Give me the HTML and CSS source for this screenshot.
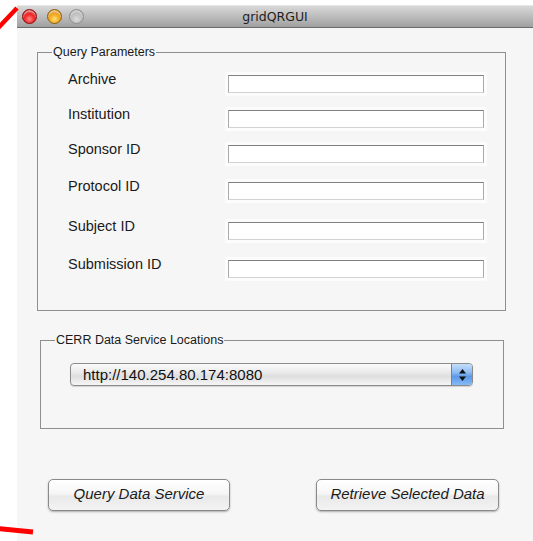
FILE: index.html
```html
<!DOCTYPE html>
<html>
<head>
<meta charset="utf-8">
<title>gridQRGUI</title>
<link rel="stylesheet" href="styles.css">
</head>
<body>
<div class="desk">
  <div class="window">
    <div class="titlebar">
      <div class="lights">
        <span class="light close"></span>
        <span class="light mini"></span>
        <span class="light zoom"></span>
      </div>
      <div class="title">gridQRGUI</div>
    </div>
    <div class="content">
      <div class="group params">
        <span class="legend">Query Parameters</span>
        <div class="form">
          <label class="lbl">Archive</label><input class="field" type="text">
          <label class="lbl">Institution</label><input class="field" type="text">
          <label class="lbl">Sponsor ID</label><input class="field" type="text">
          <label class="lbl">Protocol ID</label><input class="field" type="text">
          <label class="lbl">Subject ID</label><input class="field" type="text">
          <label class="lbl">Submission ID</label><input class="field" type="text">
        </div>
      </div>
      <div class="group locations">
        <span class="legend">CERR Data Service Locations</span>
        <div class="popup">
          <span class="popup-text">http://140.254.80.174:8080</span>
          <span class="popup-arrows">
            <svg width="9" height="14" viewBox="0 0 9 14"><path d="M4.5 1 L8 5.5 L1 5.5 Z M4.5 13 L8 8.5 L1 8.5 Z" fill="#111"/></svg>
          </span>
        </div>
      </div>
      <div class="actions">
        <button class="btn query">Query Data Service</button>
        <button class="btn retrieve">Retrieve Selected Data</button>
      </div>
    </div>
  </div>
  <svg class="marks" width="533" height="541" viewBox="0 0 533 541">
    <line x1="-2" y1="28" x2="17" y2="8" stroke="#ff0000" stroke-width="4.5"/>
    <line x1="-2" y1="528.5" x2="33" y2="532" stroke="#ff0000" stroke-width="5"/>
  </svg>
</div>
</body>
</html>
```
FILE: styles.css
```css
html, body {
  margin: 0;
  padding: 0;
  background: #ffffff;
}

.desk {
  position: relative;
  width: 533px;
  height: 541px;
  overflow: hidden;
  padding: 5px 0 0 17px;
  box-sizing: border-box;
}

.window {
  width: 516px;
  height: 536px;
  background: #f6f6f6;
  display: flex;
  flex-direction: column;
}

.titlebar {
  height: 23px;
  flex: none;
  position: relative;
  display: flex;
  align-items: center;
  background: linear-gradient(#d8d8d8, #c2c2c2 40%, #a0a0a0);
  border-bottom: 1px solid #6c6c6c;
  border-top: 1px solid #e6e6e6;
  box-sizing: border-box;
}

.lights {
  display: flex;
  padding-left: 5px;
}

.light {
  width: 15px;
  height: 15px;
  border-radius: 50%;
  box-sizing: border-box;
}

.light.close {
  background: radial-gradient(circle at 50% 70%, #ff8a8a 0, #f02020 45%, #a80808 100%);
  border: 1px solid #8a0a0a;
  box-shadow: inset 0 2px 2px rgba(255, 255, 255, 0.6);
}

.light.mini {
  margin-left: 10px;
  background: radial-gradient(circle at 50% 70%, #ffe27a 0, #f2a51a 45%, #b06a05 100%);
  border: 1px solid #8e5a06;
  box-shadow: inset 0 2px 2px rgba(255, 255, 255, 0.6);
}

.light.zoom {
  margin-left: 7px;
  background: radial-gradient(circle at 50% 70%, #dcdcdc 0, #bdbdbd 50%, #9a9a9a 100%);
  border: 1px solid #8e8e8e;
  box-shadow: inset 0 2px 2px rgba(255, 255, 255, 0.5);
}

.title {
  position: absolute;
  left: 0;
  right: 0;
  top: 3px;
  text-align: center;
  font-family: "DejaVu Sans", sans-serif;
  font-size: 12.5px;
  line-height: 16px;
  color: #1e1e1e;
  pointer-events: none;
}

.content {
  display: flex;
  flex-direction: column;
  font-family: "Liberation Sans", Arial, sans-serif;
  color: #1a1a1a;
}

.group {
  position: relative;
  border: 1px solid #8f8f8f;
  box-sizing: border-box;
}

.legend {
  position: absolute;
  top: -9px;
  left: 14px;
  padding: 0 1px;
  background: #f6f6f6;
  font-size: 12.5px;
  line-height: 16px;
  color: #1a1a1a;
}

.params {
  margin: 24px 0 0 20px;
  width: 469px;
  height: 259px;
  padding: 18px 0 0 30px;
}

.form {
  display: grid;
  grid-template-columns: 160px 256px;
  grid-template-rows: 35px 35px 37px 40px 38px auto;
  align-items: start;
}

.lbl {
  font-size: 14.5px;
  line-height: 16px;
  color: #1a1a1a;
}

.field {
  margin: 4px 0 0 0;
  width: 256px;
  height: 18px;
  box-sizing: border-box;
  padding: 0;
  background: #ffffff;
  border-style: solid;
  border-width: 1px;
  border-color: #808080 #a9a9a9 #d2d2d2 #a9a9a9;
  box-shadow: 0 0 0 3px #fcfcfc;
  outline: none;
}

.locations {
  margin: 29px 0 0 23px;
  width: 464px;
  height: 89px;
  padding: 22px 0 0 29px;
}

.popup {
  width: 403px;
  height: 23px;
  box-sizing: border-box;
  display: flex;
  align-items: stretch;
  border: 1px solid #8b8b8b;
  border-radius: 4px;
  overflow: hidden;
  background: linear-gradient(#fbfbfb, #ececec 35%, #dedede 60%, #eeeeee 85%, #f6f6f6);
  box-shadow: 0 1px 1px rgba(0, 0, 0, 0.15);
}

.popup-text {
  flex: 1;
  padding-left: 12px;
  font-size: 15px;
  line-height: 21px;
  color: #111;
}

.popup-arrows {
  width: 20px;
  display: flex;
  align-items: center;
  justify-content: center;
  border-left: 1px solid #5f86b8;
  background: linear-gradient(#c4defb, #8fbcf2 40%, #5b98e8 60%, #86bbf6);
}

.actions {
  display: flex;
  margin-top: 50px;
  padding-left: 31px;
}

.btn {
  height: 32px;
  box-sizing: border-box;
  border: 1px solid #8a8a8a;
  border-radius: 5px;
  background: linear-gradient(#ffffff, #f6f6f6 45%, #e9e9e9 55%, #f3f3f3);
  box-shadow: 0 1px 2px rgba(0, 0, 0, 0.3);
  font-family: "Liberation Sans", Arial, sans-serif;
  font-style: italic;
  font-size: 15px;
  color: #1a1a1a;
  padding: 0 0 4px 0;
  text-align: center;
}

.btn.query {
  width: 182px;
}

.btn.retrieve {
  width: 183px;
  margin-left: 86px;
}

.marks {
  position: absolute;
  left: 0;
  top: 0;
  pointer-events: none;
}
```
